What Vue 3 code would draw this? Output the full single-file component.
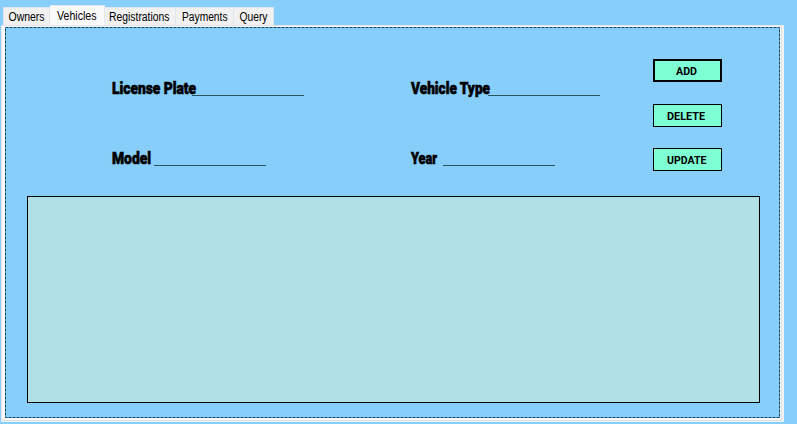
<script setup>
const tabs = [
  { name: 'Owners', width: 47, text: 36, pad: 4.5 },
  { name: 'Vehicles', width: 55, text: 39.5, pad: 7, active: true },
  { name: 'Registrations', width: 71, text: 60.5, pad: 4 },
  { name: 'Payments', width: 58, text: 45.5, pad: 6 },
  { name: 'Query', width: 40, text: 28, pad: 5.5 },
]
const fields = [
  { label: 'License Plate', text: 84, line: 80 },
  { label: 'Vehicle Type', text: 79, line: 77 },
  { label: 'Model', text: 39, line: 42 },
  { label: 'Year', text: 26, line: 32 },
]
const actions = [
  { name: 'ADD', text: 21, pad: 23 },
  { name: 'DELETE', text: 38, pad: 14 },
  { name: 'UPDATE', text: 39.5, pad: 14 },
]
</script>

<template>
  <main class="window">
    <nav class="tabs">
      <button v-for="tab in tabs" :key="tab.name" class="tab" :class="{ active: tab.active }" :style="{ width: tab.width + 'px' }">
        <svg width="100%" height="17"><text :x="tab.pad" y="13" :textLength="tab.text" lengthAdjust="spacingAndGlyphs">{{ tab.name }}</text></svg>
      </button>
    </nav>
    <section class="frame">
      <div class="page">
        <svg class="focus" width="775" height="391"><rect x=".5" y=".5" width="774" height="390" /></svg>
        <div class="top">
          <div class="fields">
            <label v-for="f in fields" :key="f.label" class="field">
              <svg width="200" height="24"><text x="0" y="17" :textLength="f.text" lengthAdjust="spacingAndGlyphs">{{ f.label }}</text><rect :x="f.line" y="18" width="112" height="1" /></svg>
            </label>
          </div>
          <div class="actions">
            <button v-for="(a, i) in actions" :key="a.name" class="action" :class="{ primary: i === 0 }">
              <svg width="69" height="23"><text :x="a.pad" y="16" :textLength="a.text" lengthAdjust="spacingAndGlyphs">{{ a.name }}</text></svg>
            </button>
          </div>
        </div>
        <div class="grid"></div>
      </div>
    </section>
  </main>
</template>

<style>
body { background: #87cefa; }
</style>

<style scoped>
* { box-sizing: border-box; }
.window { width: 797px; height: 424px; padding: 5px 0 0 1px; background: #87cefa; overflow: hidden; }
button { border: 0; padding: 0; margin: 0; display: block; }
svg { display: block; overflow: visible; }
.tabs { height: 20px; padding-left: 2px; display: flex; align-items: flex-end; }
.tab { height: 18px; background: #f1f1f1; border: 1px solid #dfe5ea; border-bottom: 0; border-left-width: 0; }
.tab:first-child { border-left-width: 1px; }
.tab.active { height: 20px; background: #fafafa; border-color: #e3e9ee; }
.tab text { font: 12px "Liberation Sans", Arial, sans-serif; fill: #000; }
.frame { width: 783px; height: 397px; padding: 2px 4px 4px; background: #f9f9f9; box-shadow: inset -2px -1px #f0f4f8, inset -3px -2px #dfdfdf, inset 1px 1px #e5e5e5; }
.page { position: relative; width: 775px; height: 391px; padding: 32px 20px 0 22px; background: #87cefa; }
.focus { position: absolute; inset: 0; }
.focus rect { fill: none; stroke: #10476f; stroke-width: 1; stroke-dasharray: 3 1; }
.top { height: 137px; display: flex; justify-content: space-between; }
.fields { padding: 18px 0 0 85px; display: grid; grid-template-columns: 299px 200px; grid-auto-rows: 70px; }
.field text { font: 900 17px Roboto, "Liberation Sans", sans-serif; fill: #000; stroke: #000; stroke-width: .65; }
.field rect { fill: #28545c; }
.actions { width: 107px; display: grid; grid-template-rows: 45px 44px 23px; }
.action { width: 69px; height: 23px; background: #7fffd4; box-shadow: inset 0 0 0 1px #000; }
.action.primary { box-shadow: inset 0 0 0 2px #000; }
.action text { font: 700 11px Roboto, "Liberation Sans", sans-serif; fill: #000; }
.grid { width: 733px; height: 207px; background: #b0e0e6; border: 1px solid #000; }
</style>
